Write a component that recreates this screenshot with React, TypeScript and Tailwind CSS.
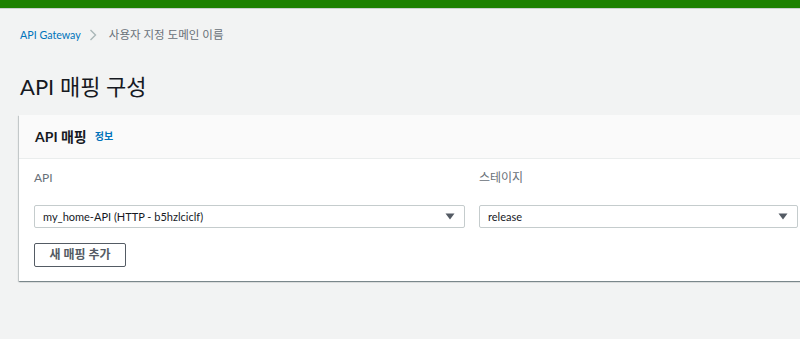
import React from "react";

const font = { fontFamily: 'Lato, "Noto Sans CJK KR", sans-serif' };

function Caret() {
  return (
    <svg width="10" height="7" viewBox="0 0 10 7" className="shrink-0">
      <path d="M0.5 0.5 H9.5 L5 6.5 Z" fill="#545b64" />
    </svg>
  );
}

function Select({ value }: { value: string }) {
  return (
    <div className="h-[23px] border border-[#c5cccd] bg-white flex items-center pl-[8px] pr-[9px] rounded-[2px]">
      <span className="flex-1 text-[11px] text-[#16191f] leading-none">{value}</span>
      <Caret />
    </div>
  );
}

export default function App() {
  return (
    <div className="w-[800px] h-[339px] bg-[#f2f3f3] overflow-hidden" style={font}>
      <div className="h-[8px] bg-[#1d8102]" />
      <div className="h-[1px] bg-[#c9d0d0]" />
      <div className="pl-[20px]">
        <div className="flex items-center h-[16px] mt-[18px]">
          <span className="text-[#0073bb] text-[10.7px]">API Gateway</span>
          <svg width="8" height="12" viewBox="0 0 8 12" className="ml-[8px] mr-[12px]">
            <path d="M1.5 1 L6.5 6 L1.5 11" fill="none" stroke="#aab7b8" strokeWidth="1.4" />
          </svg>
          <span className="text-[#687078] text-[11.5px]">사용자 지정 도메인 이름</span>
        </div>
        <h1 className="mt-[30px] h-[28px] text-[22px] leading-[28px] text-[#16191f] font-normal">API 매핑 구성</h1>
      </div>
      <div className="ml-[19px] mt-[14px] w-[820px] bg-white shadow-[0_1px_1px_0_rgba(0,28,36,0.3),1px_1px_1px_0_rgba(0,28,36,0.15),-1px_1px_1px_0_rgba(0,28,36,0.15)]">
        <div className="h-[44px] bg-[#fafafa] border-b border-[#eaeded] flex items-center pl-[16px]">
          <span className="text-[14px] font-bold text-[#16191f]">API 매핑</span>
          <span className="ml-[8px] text-[10px] font-bold text-[#0073bb]">정보</span>
        </div>
        <div className="px-[15px] pt-[9px] pb-[14px]">
          <div className="grid grid-cols-[431px_319px] gap-x-[14px]">
            <div className="text-[12px] text-[#687078] h-[20px] leading-[20px]">API</div>
            <div className="text-[12px] text-[#687078] h-[20px] leading-[20px]">스테이지</div>
          </div>
          <div className="grid grid-cols-[431px_319px] gap-x-[14px] mt-[17px]">
            <Select value="my_home-API (HTTP - b5hzlciclf)" />
            <Select value="release" />
          </div>
          <button className="mt-[15px] h-[24px] w-[92px] border border-[#545b64] bg-white text-[12px] text-[#545b64] font-bold rounded-[2px] flex items-center justify-center">
            새 매핑 추가
          </button>
        </div>
      </div>
    </div>
  );
}
